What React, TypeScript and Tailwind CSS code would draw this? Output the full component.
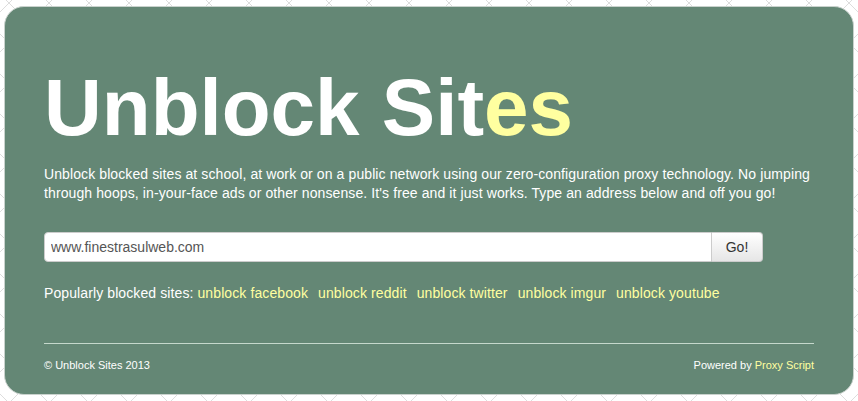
import React from "react";

const links = [
  "unblock facebook",
  "unblock reddit",
  "unblock twitter",
  "unblock imgur",
  "unblock youtube",
];

function Backdrop() {
  // fondo de rombos grises detrás de la tarjeta
  return (
    <svg className="absolute inset-0 h-full w-full" aria-hidden="true">
      <defs>
        <pattern id="diag" width="40" height="40" patternUnits="userSpaceOnUse" x="9" y="3">
          <path d="M0 0 L40 40 M40 0 L0 40" stroke="#dddddd" strokeWidth="1" fill="none" />
          <circle cx="20" cy="20" r="3" stroke="#a0a0a0" strokeWidth="1" fill="#fff" />
        </pattern>
      </defs>
      <rect width="100%" height="100%" fill="#fff" />
      <rect width="100%" height="100%" fill="url(#diag)" />
    </svg>
  );
}

export default function App() {
  return (
    <div className="relative h-[401px] w-[858px] overflow-hidden bg-white font-['Liberation_Sans',Arial,sans-serif]">
      <Backdrop />
      <div className="relative mx-[4px] mt-[6px] h-[389px] rounded-[20px] border border-[#c9d2cd] bg-[#648775] px-[39px] pt-[53px] text-white">
        <h1 className="text-[80px] font-bold leading-[96px]">
          Unblock Sit<span className="text-[#ffffa0]">es</span>
        </h1>
        <p className="mt-[9px] text-[14px] leading-[19px] tracking-[0.1px]">
          Unblock blocked sites at school, at work or on a public network using our zero-configuration proxy
          technology. No jumping through hoops, in-your-face ads or other nonsense. It's free and it just works.
          Type an address below and off you go!
        </p>
        <form className="mt-[29px] flex h-[30px] w-[719px]" onSubmit={(e) => e.preventDefault()}>
          <input
            type="text"
            defaultValue="www.finestrasulweb.com"
            className="h-full flex-1 rounded-l-[4px] border border-[#cccccc] bg-white px-[6px] text-[14px] text-[#555555] outline-none"
          />
          <button
            type="submit"
            className="h-full w-[51px] rounded-r-[4px] border border-l-0 border-[#cccccc] bg-gradient-to-b from-white to-[#e6e6e6] text-[14px] text-[#333333]"
          >
            Go!
          </button>
        </form>
        <div className="mt-[22px] flex gap-[10px] text-[14px] leading-[18px] tracking-[0.1px]">
          <span className="-mr-[6px]">Popularly blocked sites:</span>
          {links.map((l) => (
            <a key={l} href="#" className="text-[#ffffa0]">
              {l}
            </a>
          ))}
        </div>
        <hr className="mt-[41px] border-t border-[#c5d8cc]" />
        <div className="mt-[14px] flex justify-between text-[11px] leading-[14px]">
          <span>© Unblock Sites 2013</span>
          <span>
            Powered by <a href="#" className="text-[#ffffa0]">Proxy Script</a>
          </span>
        </div>
      </div>
    </div>
  );
}
